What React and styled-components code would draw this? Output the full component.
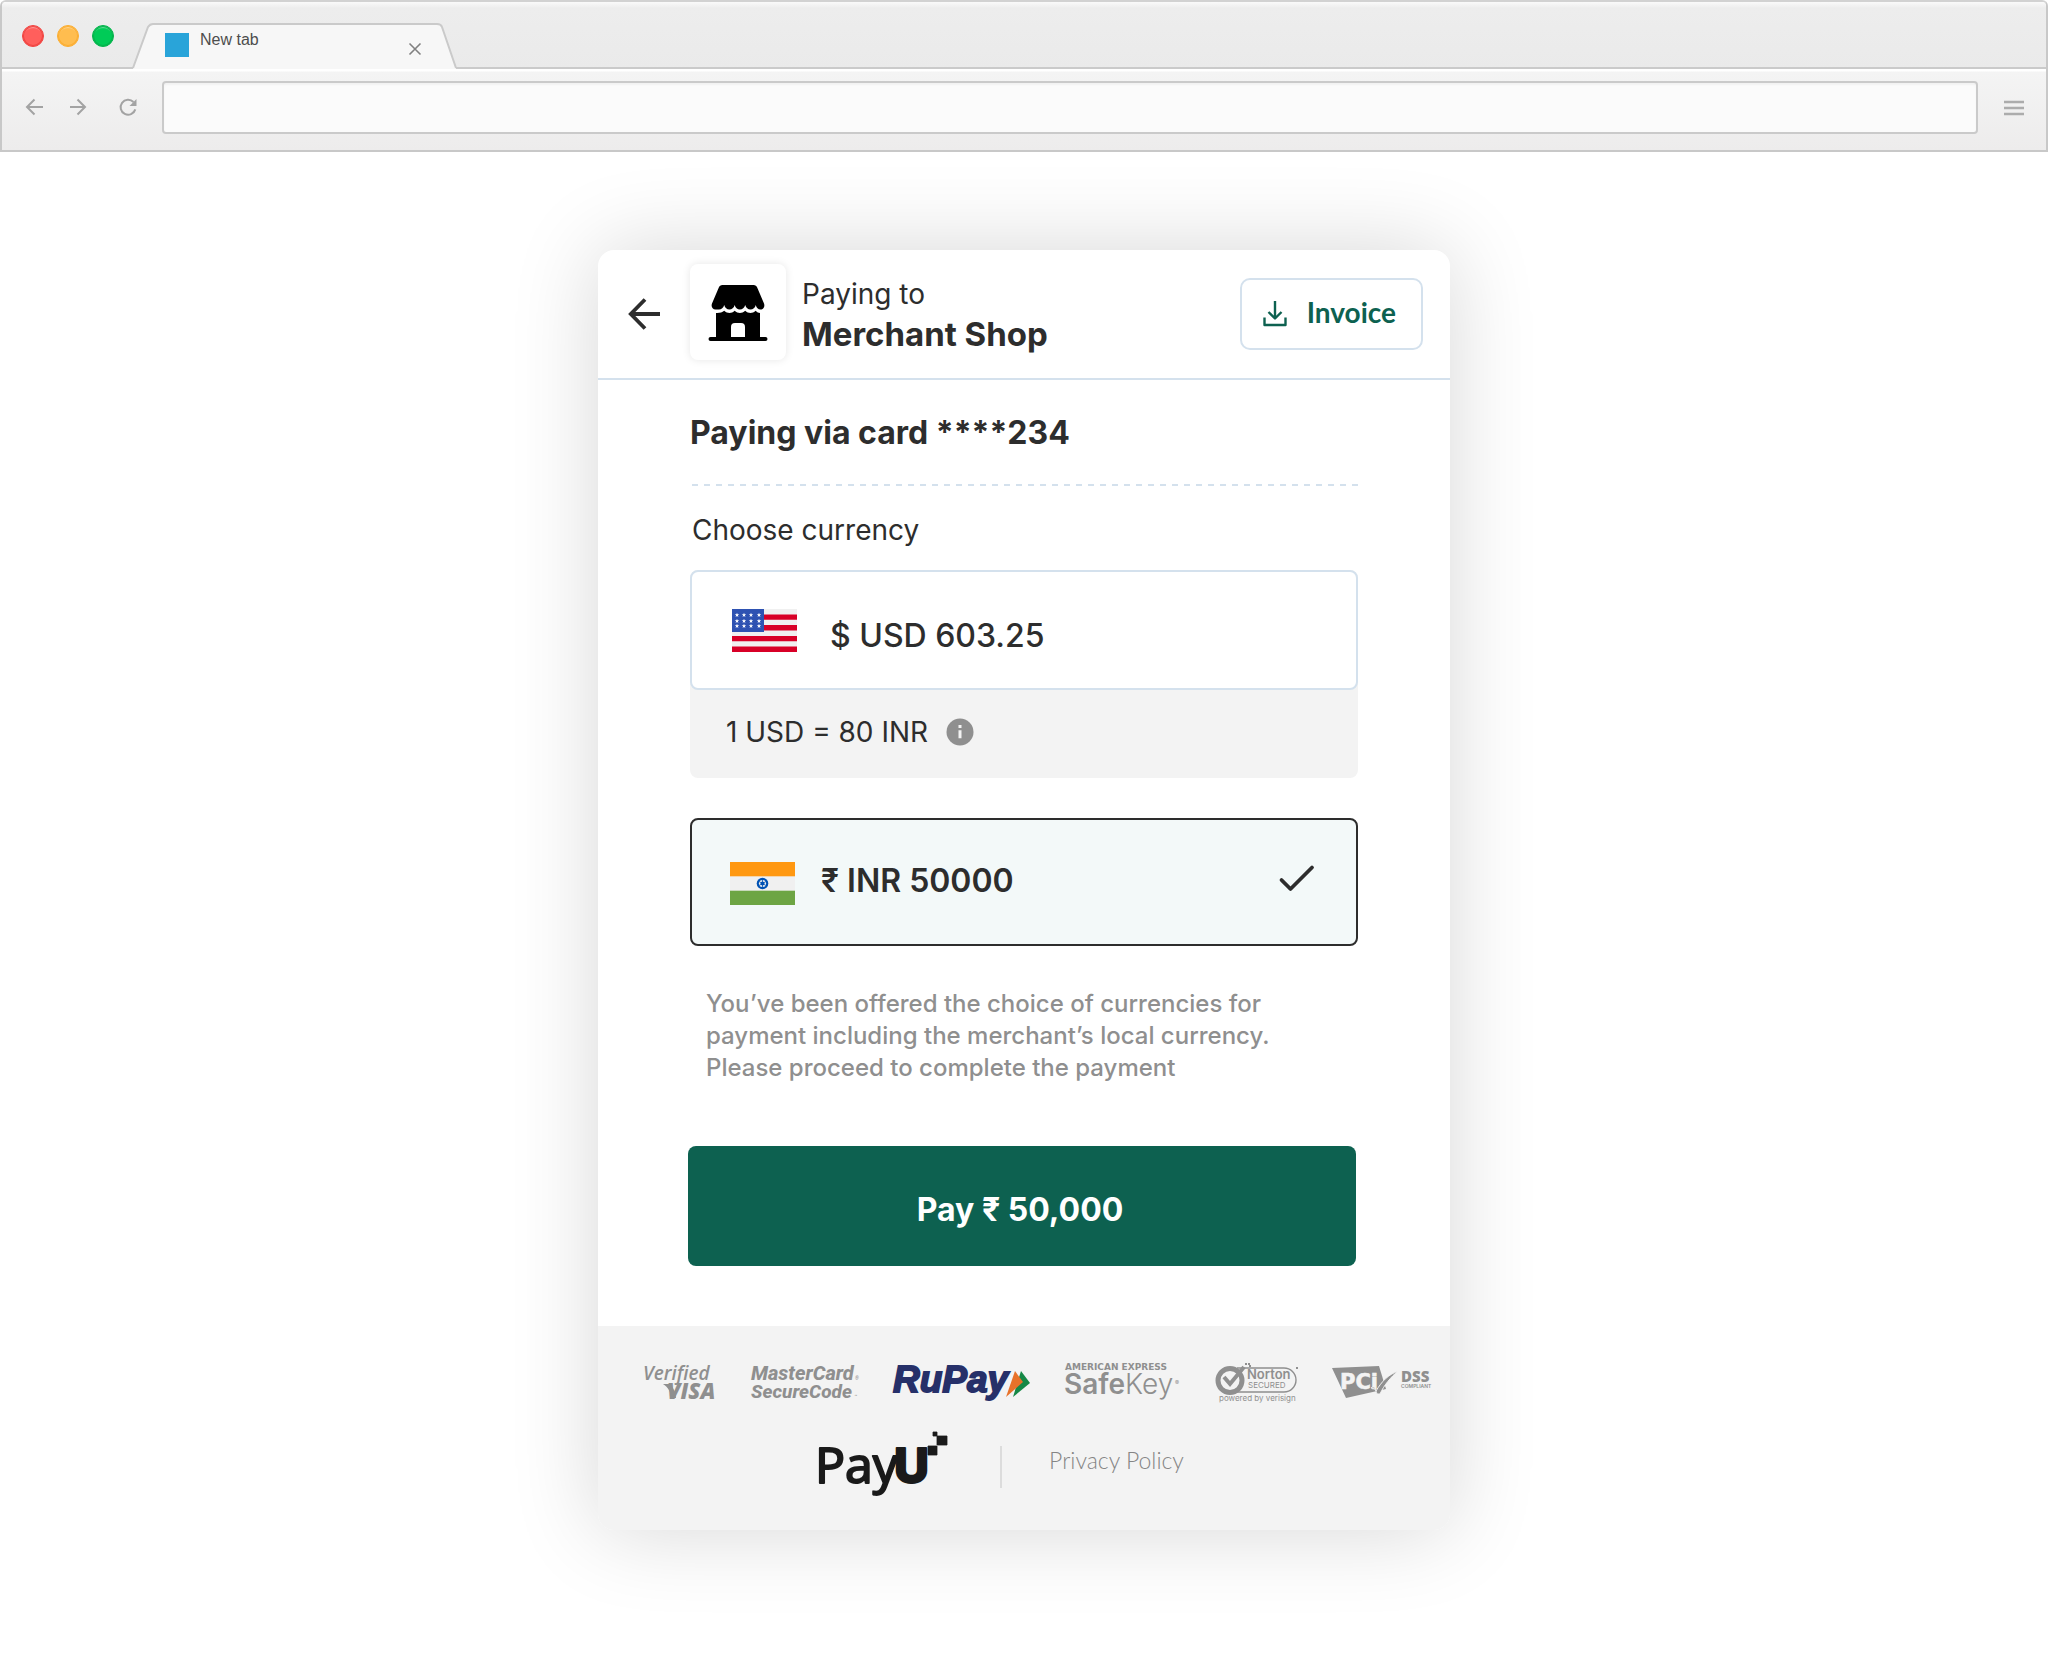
import styled, { createGlobalStyle } from 'styled-components';

const GlobalStyle = createGlobalStyle`
  * {
    box-sizing: border-box;
  }
  body {
    margin: 0;
    background: #fff;
    font-family: 'Inter', sans-serif;
    color: #2d2d2d;
  }
  button, input {
    font-family: inherit;
  }
  svg {
    flex: none;
    overflow: visible;
  }
`;

const BrowserBar = styled.div`
  border: 2px solid #c8c8c8;
  border-top-color: #d2d2d2;
  border-radius: 6px 6px 0 0;
  overflow: hidden;
`;

const TabStrip = styled.div`
  display: flex;
  align-items: flex-end;
  height: 67px;
  background: linear-gradient(#fafafa 0, #ededed 6px, #eaeaea);
  box-shadow: inset 0 -2px #cacaca;
`;

const Lights = styled.div`
  display: flex;
  align-self: center;
  gap: 13px;
  width: 131px;
  padding-left: 20px;
`;

const Light = styled.span`
  width: 22px;
  height: 22px;
  border: 1px solid ${(props) => props.$edge};
  border-radius: 50%;
  background: ${(props) => props.$fill};
  box-shadow: inset 0 0 0 1px ${(props) => props.$edge}, inset 0 3px 1px -1px rgba(255, 255, 255, 0.4);
`;

const Tab = styled.div`
  position: relative;
  display: flex;
  width: 324px;
  height: 46px;
  padding: 8px 36px 0 32px;
`;

const TabShape = styled.svg`
  position: absolute;
  inset: 0;
`;

const Favicon = styled.span`
  position: relative;
  width: 24px;
  height: 24px;
  margin-top: 2px;
  background: #29a4d9;
`;

const TabTitle = styled.span`
  position: relative;
  flex: 1;
  padding-left: 11px;
  font: 16px/18px 'Liberation Sans', sans-serif;
  color: #4d4d4d;
`;

const TabClose = styled.button`
  position: relative;
  display: flex;
  align-items: center;
  height: 36px;
  padding: 0;
  border: 0;
  background: none;
`;

const Toolbar = styled.div`
  display: flex;
  align-items: center;
  height: 81px;
  padding: 0 22px 4px 23px;
  background: linear-gradient(#fff 0, #fff 2px, #f4f4f4 3px, #edecec);
`;

const NavButton = styled.button`
  display: flex;
  width: 18px;
  height: 18px;
  margin: 0 ${(props) => props.$gap}px 2px 0;
  padding: 0;
  border: 0;
  background: none;
`;

const MenuButton = styled.button`
  display: flex;
  width: 20px;
  padding: 0;
  border: 0;
  background: none;
`;

const AddressInput = styled.input`
  flex: 1;
  height: 53px;
  margin-right: 26px;
  border: 2px solid #cacaca;
  border-radius: 4px;
  background: #fbfbfb;
  box-shadow: inset 0 2px 2px #f2f2f2;
`;

const Page = styled.main`
  display: flex;
  justify-content: center;
  padding: 98px 24px 128px;
`;

const Card = styled.section`
  width: 852px;
  border-radius: 16px;
  background: #fff;
  box-shadow: 0 0 88px rgba(0, 0, 0, 0.16);
  overflow: hidden;
`;

const CardHeader = styled.header`
  display: flex;
  align-items: center;
  height: 130px;
  padding: 0 27px 0 30px;
  border-bottom: 2px solid #d4e1ed;
`;

const BackButton = styled.button`
  display: flex;
  width: 62px;
  padding: 0;
  border: 0;
  background: none;
`;

const ShopTile = styled.div`
  display: grid;
  place-items: center;
  width: 96px;
  height: 96px;
  margin-bottom: 4px;
  padding-top: 2px;
  border-radius: 8px;
  background: #fff;
  box-shadow: 0 0 8px rgba(0, 0, 0, 0.1);
`;

const Merchant = styled.div`
  flex: 1;
  padding-left: 16px;
`;

const MerchantLabel = styled.p`
  margin: 0;
  font-size: 28px;
  line-height: 40px;
`;

const MerchantName = styled.h1`
  margin: 0;
  font-size: 33px;
  line-height: 40px;
  font-weight: 700;
`;

const InvoiceButton = styled.button`
  display: flex;
  align-items: center;
  gap: 20px;
  height: 72px;
  padding: 0 25px 0 21px;
  border: 2px solid #d4e1ed;
  border-radius: 10px;
  background: #fff;
  color: #0d6150;
  font: 700 28px/32px 'Lato', sans-serif;
`;

const InvoiceLabel = styled.span`
  padding-bottom: 4px;
`;

const CardBody = styled.div`
  padding: 33px 92px 60px;
`;

const Title = styled.h2`
  margin: 0;
  font-size: 32px;
  line-height: 40px;
  font-weight: 700;
`;

const Divider = styled.div`
  height: 2px;
  margin: 31px 0 26px 2px;
  background: repeating-linear-gradient(90deg, #d4e1ed 0 6px, transparent 6px 12px);
`;

const SectionLabel = styled.p`
  margin: 0 0 22px 2px;
  font-size: 28px;
  line-height: 36px;
`;

const RadioInput = styled.input`
  position: absolute;
  opacity: 0;
`;

const CurrencyOption = styled.label`
  display: flex;
  align-items: center;
  height: ${(props) => (props.$selected ? 128 : 120)}px;
  padding: 0 42px 0 ${(props) => (props.$selected ? 38 : 40)}px;
  border: 2px solid ${(props) => (props.$selected ? '#2d2d2d' : '#d4e1ed')};
  border-radius: 8px;
  background: ${(props) => (props.$selected ? '#f3f9f9' : '#fff')};
`;

const Amount = styled.span`
  flex: 1;
  padding: ${(props) => (props.$selected ? '0 0 2px 26px' : '12px 0 0 33px')};
  font-size: 32px;
  line-height: 40px;
  font-weight: ${(props) => (props.$selected ? 600 : 500)};
`;

const RateGroup = styled.div`
  margin-bottom: 40px;
  border-radius: 8px;
  background: #f3f3f3;
`;

const Rate = styled.div`
  display: flex;
  align-items: center;
  gap: 18px;
  height: 88px;
  padding: 0 36px 4px;
  font-size: 28px;
  line-height: 36px;
`;

const Notice = styled.p`
  margin: 42px 0 62px;
  padding: 0 60px 0 16px;
  font-size: 24px;
  line-height: 32px;
  font-weight: 500;
  color: #8f8f8f;
`;

const PayButton = styled.button`
  display: block;
  width: 100%;
  height: 120px;
  margin-left: -2px;
  padding: 8px 4px 0 0;
  border: 0;
  border-radius: 8px;
  background: #0d6150;
  color: #fff;
  font-size: 32px;
  line-height: 40px;
  font-weight: 700;
`;

const CardFooter = styled.footer`
  padding: 32px 18px 16px 41px;
  background: #f3f3f3;
`;

const BadgeRow = styled.div`
  display: flex;
  align-items: center;
  justify-content: space-between;
  height: 48px;
`;

const LegalRow = styled.div`
  display: flex;
  align-items: center;
  justify-content: center;
  height: 96px;
  margin-top: 12px;
  padding-right: 68px;
`;

const LegalSeparator = styled.span`
  width: 2px;
  height: 42px;
  margin: 2px 47px 0 51px;
  background: #dcdcdc;
`;

const PrivacyLink = styled.a`
  padding-bottom: 12px;
  color: #858585;
  font: 300 23px/32px 'Lato', sans-serif;
  text-decoration: none;
`;

const BackIcon = () => (
  <svg width="18" height="18" viewBox="0 0 18 18" fill="none" stroke="#a3a3a3" strokeWidth="2">
    <path d="M18 9H3M9.500 1.500 2 9l7.500 7.500" />
  </svg>
);

const ForwardIcon = () => (
  <svg width="18" height="18" viewBox="0 0 18 18" fill="none" stroke="#a3a3a3" strokeWidth="2">
    <path d="M1 9h14M8.500 1.500 16 9l-7.500 7.500" />
  </svg>
);

const ReloadIcon = () => (
  <svg width="18" height="18" viewBox="0 0 18 18" fill="none" stroke="#a3a3a3" strokeWidth="2">
    <path d="M16.300 11.400A7.500 7.500 0 1 1 14.500 4" />
    <path d="M17.500 1v7h-7z" fill="#a3a3a3" stroke="none" />
  </svg>
);

const MenuIcon = () => (
  <svg width="20" height="18" viewBox="0 0 20 18" stroke="#acacac" strokeWidth="2.500">
    <path d="M0 3h20M0 9h20M0 15h20" />
  </svg>
);

const CloseIcon = () => (
  <svg width="12" height="12" viewBox="0 0 12 12" stroke="#808080" strokeWidth="1.600">
    <path d="M.5.5l11 11M11.500.5l-11 11" />
  </svg>
);

const ArrowLeft = () => (
  <svg width="32" height="32" viewBox="0 0 32 32" fill="none" stroke="#2d2d2d" strokeWidth="3.800">
    <path d="M32 16H3M17 1.500 2.800 16 17 30.500" />
  </svg>
);

const ShopIcon = () => (
  <svg width="58" height="56" viewBox="0 0 58 56">
    <path d="M13.500 0h31c2 0 3 1 3.800 2.800L55 18.500c1.200 3.300-.8 6-3.600 6-2.200 0-4-1.600-4.600-4.500-.7 2.900-2.800 4.500-5.300 4.500S37 22.900 36.200 20c-.8 2.900-2.700 4.500-5.300 4.500S26.400 22.900 25.700 20c-.8 2.900-2.800 4.500-5.300 4.500S16 22.900 15.200 20c-.8 2.900-2.700 4.500-5.300 4.500H6.500c-3 0-4.700-2.700-3.500-6L9.700 2.800C10.500 1 11.500 0 13.500 0z" />
    <path d="M7 28c3.500.2 6-.4 8.200-2.200 3.300 2.900 7.300 2.900 10.500 0 3.200 2.900 7.200 2.900 10.500 0 3.200 2.900 7.200 2.900 10.500 0C48 27.400 49.500 28 51 28v24h5.500a1.800 1.800 0 0 1 0 4h-55a1.800 1.800 0 0 1 0-4H7zm15 24h14V42c0-2.800-1.200-4-4-4h-6c-2.800 0-4 1.200-4 4z" />
  </svg>
);

const DownloadIcon = () => (
  <svg width="24" height="26" viewBox="0 0 24 26" fill="none" stroke="#0d6150" strokeWidth="2.400">
    <path d="M12 0v17M5.500 11l6.500 6.500L18.500 11M1.500 16.500V24h21v-7.500" strokeLinejoin="round" />
  </svg>
);

const Star = ({ x, y }) => (
  <path
    transform={`translate(${x} ${y})`}
    d="M0-2.300.6-.7 2.200-.7.9.300 1.400 1.900 0 .9-1.400 1.900-.9.300-2.200-.7-.6-.7z"
    fill="#fff"
  />
);

const UsFlag = () => (
  <svg width="65" height="43" viewBox="0 0 65 43">
    <rect width="65" height="43" fill="#f0f0f0" />
    <path d="M0 5.400h65v5.400H0zM0 16.100h65v5.400H0zM0 26.900h65v5.400H0zM0 37.600h65V43H0z" fill="#d80027" />
    <rect width="32" height="23" fill="#2e52b2" />
    {[6, 12, 17].map((y) => [5, 12, 19, 27].map((x) => <Star key={`${x}-${y}`} x={x} y={y} />))}
  </svg>
);

const IndiaFlag = () => (
  <svg width="65" height="46" viewBox="0 -3 65 46">
    <rect width="65" height="43" fill="#f0f0f0" />
    <rect width="65" height="14.300" fill="#ff9811" />
    <rect y="28.700" width="65" height="14.300" fill="#6da544" />
    <circle cx="32.500" cy="21.500" r="5.800" fill="#0052b4" />
    <circle cx="32.500" cy="21.500" r="3.600" fill="#f0f0f0" />
    <circle cx="32.500" cy="21.500" r="2" fill="#0052b4" />
    <path d="M32.500 17.500v8M29 19.500l7 4M29 23.500l7-4" stroke="#0052b4" strokeWidth=".8" />
  </svg>
);

const InfoIcon = () => (
  <svg width="28" height="28" viewBox="0 0 28 28">
    <circle cx="14" cy="14" r="13.500" fill="#8f8f8f" />
    <path d="M14 7v3M14 12.200v8" stroke="#f3f3f3" strokeWidth="3" />
  </svg>
);

const CheckIcon = () => (
  <svg width="35" height="32" viewBox="0 0 35 32" fill="none" stroke="#2d2d2d" strokeWidth="3.800">
    <path d="M2.500 14 11.500 23 33 1.500" strokeLinecap="round" strokeLinejoin="round" />
  </svg>
);

const VerifiedVisa = () => (
  <svg width="78" height="48" viewBox="0 0 78 48" fill="#8f8f8f" fontStyle="italic">
    <text x="4" y="22" fontFamily="Open Sans" fontSize="19" fontWeight="600">Verified</text>
    <path d="M24 26h8l4 8 1 6h-4c-2-7-4-11-9-14z" />
    <text x="28" y="41" fontFamily="Open Sans" fontSize="22" fontWeight="800">VISA</text>
  </svg>
);

const SecureCode = () => (
  <svg width="108" height="48" viewBox="0 0 108 48" fill="#8f8f8f" fontFamily="Roboto" fontStyle="italic">
    <text x="0" y="22" fontSize="20" fontWeight="800">MasterCard</text>
    <text x="104" y="22" fontSize="5">®</text>
    <text x="0" y="40" fontSize="19" fontWeight="800">SecureCode</text>
    <text x="103" y="40" fontSize="5">™</text>
  </svg>
);

const RuPay = () => (
  <svg width="138" height="48" viewBox="0 0 138 48">
    <text x="1" y="34" fill="#263069" stroke="#263069" strokeWidth="1.800" fontFamily="Liberation Sans" fontSize="37" fontWeight="700" fontStyle="italic">RuPay</text>
    <path d="M129 13l9 12-17 14z" fill="#168846" />
    <path d="M123 13l8 11-17 15z" fill="#e8722a" />
  </svg>
);

const SafeKey = () => (
  <svg width="118" height="48" viewBox="0 0 118 48" fill="#8f8f8f">
    <text x="1" y="12" fontFamily="DejaVu Sans" fontSize="9" fontWeight="700">AMERICAN EXPRESS</text>
    <text x="0" y="36" fontFamily="Inter" fontSize="28">
      <tspan fontWeight="600">Safe</tspan>
      <tspan fontWeight="300">Key</tspan>
    </text>
    <text x="111" y="27" fontFamily="Inter" fontSize="6">®</text>
  </svg>
);

const Norton = () => (
  <svg width="83" height="48" viewBox="0 0 83 48" fill="#8f8f8f">
    <path d="M22 10h47a12 12 0 0 1 0 24H20" fill="none" stroke="#8f8f8f" strokeWidth="1.400" />
    <circle cx="15" cy="22.500" r="12" fill="#f3f3f3" stroke="#8f8f8f" strokeWidth="5" />
    <path d="M9 19l6 7L29 9" fill="none" stroke="#8f8f8f" strokeWidth="4" />
    <path d="M30 5h2v2h-2zM33 5h2v2h-2zM34 7h2v2h-2zM81 9h2v2h-2z" />
    <text x="32" y="21" fontFamily="Inter" fontSize="13" fontWeight="600">Norton</text>
    <text x="33" y="30" fontFamily="Inter" fontSize="8">SECURED</text>
    <text x="4" y="43" fontFamily="Inter" fontSize="8">powered by verisign</text>
  </svg>
);

const PciDss = () => (
  <svg width="100" height="48" viewBox="0 0 100 48" fill="#8f8f8f">
    <path d="M0 10 47 8 54 31 14 40z" />
    <text x="8" y="31" fill="#f3f3f3" stroke="#f3f3f3" strokeWidth=".6" fontFamily="DejaVu Sans" fontSize="21" fontWeight="700">PCi</text>
    <path d="M39 30c2-2 4-1 5 3C50 23 56 17 66 13 59 19 52 27 48 36h-3c-1-4-2-6-6-6z" stroke="#f3f3f3" />
    <text x="69" y="24" fontFamily="Open Sans" fontSize="15" fontWeight="800">DSS</text>
    <text x="69" y="30" fontFamily="Inter" fontSize="5" fontWeight="600">COMPLIANT</text>
  </svg>
);

const PayULogo = () => (
  <svg width="130" height="72" viewBox="0 0 130 72" fill="#1a1a1a" stroke="#1a1a1a" strokeLinejoin="round">
    <text x="-4" y="53" fontFamily="Open Sans" fontSize="50" strokeWidth="2">Pay</text>
    <text x="75" y="53" fontFamily="Inter" fontSize="48" fontWeight="800" strokeWidth="2">U</text>
    <path d="M109 16h9v9h-9zM118 6h10v9h-10zM114 2h4v4h-4z" strokeWidth=".8" />
  </svg>
);

const App = () => {
  return (
    <>
      <GlobalStyle />
      <BrowserBar>
        <TabStrip>
          <Lights>
            <Light $fill="#ff5f5c" $edge="#f04542" />
            <Light $fill="#ffbd4f" $edge="#fbae33" />
            <Light $fill="#00cb57" $edge="#05b34c" />
          </Lights>
          <Tab>
            <TabShape width="324" height="46" viewBox="0 0 324 46">
              <path d="M0 46V45L15 4Q17 1 20 1H304Q308 1 309 4L323 45V46Z" fill="#f7f7f7" />
              <path d="M0 45 15 4Q17 1 20 1H304Q308 1 309 4L323 45" fill="none" stroke="#cacaca" strokeWidth="2" />
            </TabShape>
            <Favicon />
            <TabTitle>New tab</TabTitle>
            <TabClose aria-label="Close tab"><CloseIcon /></TabClose>
          </Tab>
        </TabStrip>
        <Toolbar>
          <NavButton aria-label="Back" $gap={26}><BackIcon /></NavButton>
          <NavButton aria-label="Forward" $gap={32}><ForwardIcon /></NavButton>
          <NavButton aria-label="Reload" $gap={25}><ReloadIcon /></NavButton>
          <AddressInput aria-label="Address" />
          <MenuButton aria-label="Menu"><MenuIcon /></MenuButton>
        </Toolbar>
      </BrowserBar>
      <Page>
        <Card>
          <CardHeader>
            <BackButton aria-label="Go back"><ArrowLeft /></BackButton>
            <ShopTile><ShopIcon /></ShopTile>
            <Merchant>
              <MerchantLabel>Paying to</MerchantLabel>
              <MerchantName>Merchant Shop</MerchantName>
            </Merchant>
            <InvoiceButton>
              <DownloadIcon />
              <InvoiceLabel>Invoice</InvoiceLabel>
            </InvoiceButton>
          </CardHeader>
          <CardBody>
            <Title>Paying via card ****234</Title>
            <Divider />
            <SectionLabel>Choose currency</SectionLabel>
            <RateGroup>
              <CurrencyOption>
                <RadioInput type="radio" name="currency" value="usd" />
                <UsFlag />
                <Amount>$ USD 603.25</Amount>
              </CurrencyOption>
              <Rate>1 USD = 80 INR <InfoIcon /></Rate>
            </RateGroup>
            <CurrencyOption $selected>
              <RadioInput type="radio" name="currency" value="inr" defaultChecked />
              <IndiaFlag />
              <Amount $selected>₹ INR 50000</Amount>
              <CheckIcon />
            </CurrencyOption>
            <Notice>
              You’ve been offered the choice of currencies for payment including the merchant’s local currency. Please proceed to complete the payment
            </Notice>
            <PayButton>Pay ₹ 50,000</PayButton>
          </CardBody>
          <CardFooter>
            <BadgeRow>
              <VerifiedVisa />
              <SecureCode />
              <RuPay />
              <SafeKey />
              <Norton />
              <PciDss />
            </BadgeRow>
            <LegalRow>
              <PayULogo />
              <LegalSeparator />
              <PrivacyLink href="#privacy">Privacy Policy</PrivacyLink>
            </LegalRow>
          </CardFooter>
        </Card>
      </Page>
    </>
  );
};

export default App;
